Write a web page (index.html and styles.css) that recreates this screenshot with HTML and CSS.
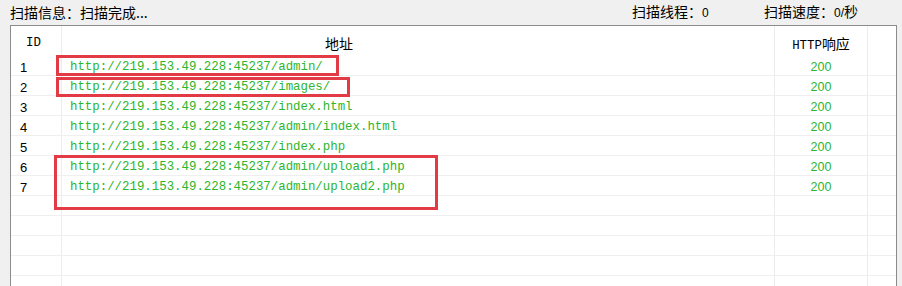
FILE: index.html
```html
<!DOCTYPE html>
<html lang="zh">
<head>
  <meta charset="UTF-8">
  <title>扫描结果</title>
  <link rel="stylesheet" href="styles.css">
</head>
<body>
  <div class="status">
    <span class="info">扫描信息：扫描完成...</span>
    <span class="threads">扫描线程：<b>0</b></span>
    <span class="speed">扫描速度：<b>0/</b>秒</span>
  </div>
  <div class="list">
    <div class="row head">
      <div class="c id">ID</div>
      <div class="c url">地址</div>
      <div class="c code"><span class="mono">HTTP</span>响应</div>
      <div class="c end"></div>
    </div>
    <div class="row"><div class="c id">1</div><div class="c url">http://219.153.49.228:45237/admin/</div><div class="c code">200</div><div class="c end"></div></div>
    <div class="row"><div class="c id">2</div><div class="c url">http://219.153.49.228:45237/images/</div><div class="c code">200</div><div class="c end"></div></div>
    <div class="row"><div class="c id">3</div><div class="c url">http://219.153.49.228:45237/index.html</div><div class="c code">200</div><div class="c end"></div></div>
    <div class="row"><div class="c id">4</div><div class="c url">http://219.153.49.228:45237/admin/index.html</div><div class="c code">200</div><div class="c end"></div></div>
    <div class="row"><div class="c id">5</div><div class="c url">http://219.153.49.228:45237/index.php</div><div class="c code">200</div><div class="c end"></div></div>
    <div class="row"><div class="c id">6</div><div class="c url">http://219.153.49.228:45237/admin/upload1.php</div><div class="c code">200</div><div class="c end"></div></div>
    <div class="row"><div class="c id">7</div><div class="c url">http://219.153.49.228:45237/admin/upload2.php</div><div class="c code">200</div><div class="c end"></div></div>
    <div class="row"><div class="c id"></div><div class="c url"></div><div class="c code"></div><div class="c end"></div></div>
    <div class="row"><div class="c id"></div><div class="c url"></div><div class="c code"></div><div class="c end"></div></div>
    <div class="row"><div class="c id"></div><div class="c url"></div><div class="c code"></div><div class="c end"></div></div>
    <div class="row"><div class="c id"></div><div class="c url"></div><div class="c code"></div><div class="c end"></div></div>
    <div class="row"><div class="c id"></div><div class="c url"></div><div class="c code"></div><div class="c end"></div></div>
  </div>

  <!-- красные рамки поверх таблицы -->
  <div class="mark m1"></div>
  <div class="mark m2"></div>
  <div class="mark m3"></div>
</body>
</html>
```

FILE: styles.css
```css
* { box-sizing: border-box; margin: 0; padding: 0; }
body {
  width: 902px; height: 286px;
  overflow: hidden;
  position: relative;
  background: #f0f0f0;
  color: #000;
  font-family: "Noto Sans CJK SC", "Liberation Sans", sans-serif;
  font-size: 14px;
}
b { font-weight: normal; font-family: "Liberation Sans", sans-serif; font-size: 12px; }
.mono { font-family: "Liberation Mono", monospace; font-size: 12.4px; }

.status {
  display: flex;
  height: 25px;
  align-items: center;
  padding-left: 10px;
  line-height: 25px;
}
.info { flex: 1; }
.threads { width: 132px; }
.speed { width: 138px; }

.list {
  margin-left: 10px;
  width: 887px;
  height: 270px;
  border: 1px solid #8c8c8c;
  background: #fff;
}
.row {
  display: grid;
  grid-template-columns: 51px 713px 93px 1fr;
  height: 20px;
  line-height: 19px;
  border-bottom: 1px solid #efefef;
}
.row .c { padding-top: 2px; }
.row.head { height: 30px; line-height: 30px; border-bottom: none; }
.row.head .c { padding-top: 2px; }
.c { border-right: 1px solid #ececec; white-space: nowrap; overflow: hidden; }
.c.end { border-right: none; }
.c.id { padding-left: 9px; font-family: "Liberation Sans", sans-serif; font-size: 13px; }
.c.url {
  padding-left: 8px;
  color: #2db52d;
  font-family: "Liberation Mono", monospace;
  font-size: 12.4px;
}
.c.code {
  text-align: center;
  color: #2db52d;
  font-family: "Liberation Sans", sans-serif;
  font-size: 12.5px;
}
.head .c.id { padding-left: 15px; font-family: "Liberation Mono", monospace; font-size: 12.4px; }
.head .c.url { color: #000; padding-left: 263px; font-family: inherit; font-size: 14px; }
.head .c.code { color: #000; font-family: inherit; font-size: 14px; }

.mark {
  position: absolute;
  border: 3px solid #e33b46;
}
.m1 { left: 56px; top: 55px; width: 283px; height: 21px; }
.m2 { left: 56px; top: 77px; width: 294px; height: 20px; }
.m3 { left: 54px; top: 155px; width: 384px; height: 55px; }
```
